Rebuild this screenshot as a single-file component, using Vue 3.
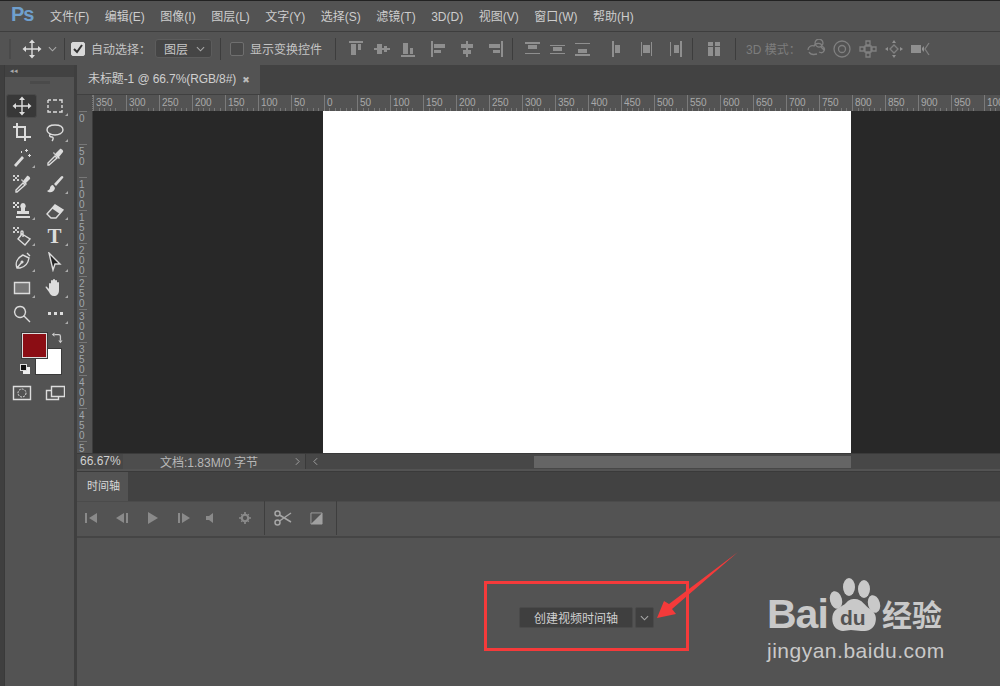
<template>
  <div class="app">
    <header class="menubar">
      <span class="logo">Ps</span>
      <nav class="menus">
        <span v-for="m in menus" :key="m">{{ m }}</span>
      </nav>
    </header>

    <section class="options">
      <i class="grip"></i>
      <svg class="ico move-ico" viewBox="0 0 20 20"><path class="st" :d="moveIcon.s" /><path class="fl" :d="moveIcon.f" /></svg>
      <svg class="chev" viewBox="0 0 10 6"><path d="M1 1l4 4 4-4" /></svg>
      <i class="sep s1"></i>
      <span class="check on">
        <svg viewBox="0 0 12 12"><path d="M2 6l3 3 5-7" /></svg>
      </span>
      <span class="lbl auto">自动选择：</span>
      <span class="select">图层<svg class="chev" viewBox="0 0 10 6"><path d="M1 1l4 4 4-4" /></svg></span>
      <i class="sep s2"></i>
      <span class="check"></span>
      <span class="lbl show">显示变换控件</span>
      <i class="sep s3"></i>
      <div class="aligns first">
        <svg v-for="d in alignA" :key="d" class="ico" viewBox="0 0 20 20"><path class="mut" :d="d" /></svg>
      </div>
      <div class="aligns second">
        <svg v-for="d in alignB" :key="d" class="ico" viewBox="0 0 20 20"><path class="mut" :d="d" /></svg>
      </div>
      <i class="sep s4"></i>
      <div class="aligns third">
        <svg v-for="d in alignC" :key="d" class="ico" viewBox="0 0 20 20"><path class="mut" :d="d" /></svg>
      </div>
      <div class="aligns fourth">
        <svg v-for="d in alignD" :key="d" class="ico" viewBox="0 0 20 20"><path class="mut" :d="d" /></svg>
      </div>
      <i class="sep s5"></i>
      <svg class="ico dist" viewBox="0 0 20 20"><path class="mut" d="M4 3h5v4H4zM11 3h5v4h-5zM4 8h5v9H4zM11 8h5v9h-5z" /></svg>
      <i class="sep s6"></i>
      <span class="lbl mode">3D 模式：</span>
      <div class="modes">
        <svg class="ico" viewBox="0 0 20 20"><path class="dim" d="M2 11c0-3 3-5 6-4 1-3 7-4 8 0 2 1 3 3 2 5s-3 2-5 1M3 13c1 2 4 3 8 2M9 4a4 4 0 1 1 0 .1M15 8l3 3" /></svg>
        <svg class="ico" viewBox="0 0 20 20"><circle class="dim" cx="10" cy="10" r="8" /><circle class="dim" cx="10" cy="10" r="3.500" /></svg>
        <svg class="ico" viewBox="0 0 20 20"><path class="dim" d="M8 2h4v4H8zM8 14h4v4H8zM2 8h4v4H2zM14 8h4v4h-4zM7 7h6v6H7z" /></svg>
        <svg class="ico" viewBox="0 0 20 20"><path class="dim" d="M6 10l4-4 4 4-4 4z" /><path class="mut" d="M10 1l2 3H8zM10 19l2-3H8zM1 10l3-2v4zM19 10l-3-2v4z" /></svg>
        <svg class="ico" viewBox="0 0 20 20"><path class="mut" d="M1 6h10v8H1zM12 9l2-2v6l-2-2z" /><path class="dim" d="M19 4l-4 6 4 6" /></svg>
      </div>
    </section>

    <div class="work">
      <aside class="toolbar">
        <div class="tb-head">◂◂</div>
        <div class="tb-grip"></div>
        <div class="tools">
          <div v-for="(t, i) in tools" :key="i" class="tool" :class="{ active: i === 0, corner: t.corner }">
            <span v-if="t.text" class="t-tool">{{ t.text }}</span>
            <svg v-else class="ico" viewBox="0 0 20 20">
              <path v-if="t.f" class="fl" :class="{ gray: t.gray }" :d="t.f" />
              <path v-if="t.s" class="st" :class="{ dark: t.dark }" :d="t.s" />
              <path v-if="t.k" class="blk" :d="t.k" />
            </svg>
          </div>
        </div>
        <div class="colors">
          <span class="swatch bg"></span>
          <span class="swatch fg"></span>
          <svg class="swap" viewBox="0 0 14 14"><path d="M4 3h5a2 2 0 0 1 2 2v5" /><path d="M4 0.500v5L1 3zM8.500 10h5L11 13z" /></svg>
          <span class="mini white"></span>
          <span class="mini black"></span>
        </div>
        <div class="modes-row">
          <svg class="ico" viewBox="0 0 20 20"><path class="st" d="M1.500 3.500h17v13h-17z" /><circle class="dash" cx="10" cy="10" r="4" /></svg>
          <svg class="ico corner-ico" viewBox="0 0 20 20"><path class="st" d="M6.500 3.500h13v10h-13zM6.500 7.500h-5v9h12v-3" /></svg>
        </div>
      </aside>

      <main class="doc">
        <div class="tabs">
          <div class="tab">未标题-1 @ 66.7%(RGB/8#)<span class="close">✖</span></div>
        </div>
        <div class="hruler">
          <span class="corner-box"></span>
          <span v-for="(n, i) in hmarks" :key="i" class="hcell">{{ n }}</span>
        </div>
        <div class="stage">
          <div class="vruler">
            <span v-for="n in vmarks" :key="n" class="vcell">{{ n }}</span>
          </div>
          <div class="canvas"><div class="paper"></div></div>
        </div>
        <div class="status">
          <span class="zoom">66.67%</span>
          <span class="docinfo">文档:1.83M/0 字节</span>
          <svg class="arr" viewBox="0 0 6 10"><path d="M1 1l4 4-4 4" /></svg>
          <div class="scroll">
            <svg class="arr back" viewBox="0 0 6 10"><path d="M5 1L1 5l4 4" /></svg>
            <span class="thumb"></span>
          </div>
        </div>
        <div class="tl-tabs">
          <div class="tl-tab">时间轴</div>
        </div>
        <div class="tl-bar">
          <svg class="tr first-tr" viewBox="0 0 14 12"><path d="M1 1h2v10H1zM13 1v10L5 6z" /></svg>
          <svg class="tr" viewBox="0 0 14 12"><path d="M9 1v10L1 6zM11 1h2v10h-2z" /></svg>
          <svg class="tr" viewBox="0 0 14 12"><path d="M2 0l10 6-10 6z" /></svg>
          <svg class="tr" viewBox="0 0 14 12"><path d="M1 1h2v10H1zM5 1l8 5-8 5z" /></svg>
          <svg class="tr narrow" viewBox="0 0 14 12"><path d="M2 4h3l4-3v10L5 8H2z" /></svg>
          <svg class="gear" viewBox="0 0 14 14"><circle cx="7" cy="7" r="3.800" fill="none" stroke="#8a8a8a" stroke-width="2.600" /><path d="M6 0h2v3H6zM6 11h2v3H6zM0 6h3v2H0zM11 6h3v2h-3zM2 3l1-1 2 2-1 1zM9 10l1-1 2 2-1 1zM11 2l1 1-2 2-1-1zM4 9l1 1-2 2-1-1z" /></svg>
          <i class="tl-sep a"></i>
          <svg class="scissors" viewBox="0 0 18 16"><circle cx="3.500" cy="3.500" r="2.500" /><circle cx="3.500" cy="12.500" r="2.500" /><path d="M5.500 5L17 12M5.500 11L17 3" /></svg>
          <svg class="tr split" viewBox="0 0 14 14"><path d="M1 1h12v12H1z" fill="none" stroke="#a0a0a0" /><path d="M1 13L13 1v12z" /></svg>
          <i class="tl-sep b"></i>
        </div>
        <div class="tl-body">
          <button class="create">创建视频时间轴</button>
          <button class="more"><svg class="chev" viewBox="0 0 10 6"><path d="M1 1l4 4 4-4" /></svg></button>
        </div>
      </main>
    </div>

    <!-- red annotation drawn over the screenshot -->
    <div class="mark"></div>
    <svg class="pointer" viewBox="0 0 1000 686">
      <path d="M738 552L669 604 664 601 657 618 676 614 672 609z" />
    </svg>

    <div class="watermark">
      <div class="wm-top">
        <span class="bai">Bai</span>
        <svg class="paw" viewBox="0 0 60 60">
          <ellipse cx="25" cy="9" rx="6" ry="9" />
          <ellipse cx="40" cy="11" rx="6" ry="9" />
          <ellipse cx="12" cy="22" rx="6" ry="9" transform="rotate(-15 12 22)" />
          <ellipse cx="50" cy="26" rx="6" ry="9" transform="rotate(-15 50 26)" />
          <path d="M31 21c7 0 10 7 15 10 6 4 7 9 5 15-3 7-9 7-14 7-3 0-7-1-10-1-4 0-8 2-12 0-6-2-8-10-6-16 2-6 9-7 13-11 3-3 4-4 9-4z" />
          <text x="16" y="47" class="du">du</text>
        </svg>
        <span class="jy">经验</span>
      </div>
      <div class="wm-url">jingyan.baidu.com</div>
    </div>
  </div>
</template>

<script setup>
  const menus = [
    "文件(F)",
    "编辑(E)",
    "图像(I)",
    "图层(L)",
    "文字(Y)",
    "选择(S)",
    "滤镜(T)",
    "3D(D)",
    "视图(V)",
    "窗口(W)",
    "帮助(H)",
  ];

  const moveIcon = {
    s: "M10 3V17M3 10H17",
    f: "M10 0.500l3 3.500H7zM10 19.500l3-3.500H7zM0.500 10l3.500-3v6zM19.500 10l-3.500-3v6z",
  };

  const alignA = [
    "M3 2h14v2H3zM5 5h5v11H5zM12 5h3v6h-3z",
    "M2 9h16v2H2zM5 5h5v10H5zM12 7h3v6h-3z",
    "M3 16h14v2H3zM5 4h5v11H5zM12 9h3v6h-3z",
  ];
  const alignB = [
    "M3 2h2v16H3zM6 5h11v4H6zM6 11h7v3H6z",
    "M9 2h2v16H9zM4 5h12v4H4zM6 11h8v4H6z",
    "M15 2h2v16h-2zM3 5h11v4H3zM7 11h7v3H7z",
  ];
  const alignC = [
    "M3 3h15v2H3zM6 6h9v4H6zM3 14h15v1H3z",
    "M3 6h15v1H3zM6 8h9v4H6zM3 14h15v1H3z",
    "M3 4h15v1H3zM6 10h9v4H6zM3 15h15v2H3z",
  ];
  const alignD = [
    "M4 2h2v16H4zM7 6h5v8H7z",
    "M4 3h1v14H4zM6 6h7v8H6zM14 3h1v14h-1z",
    "M14 2h2v16h-2zM8 6h5v8H8zM4 3h1v14H4z",
  ];

  const checker = "M1 1h2v2H1zM5 1h2v2H5zM3 3h2v2H3zM1 5h2v2H1zM5 5h2v2H5z";

  const tools = [
    moveIcon,
    { s: "M3 4h3M8 4h4M14 4h3V7M17 9v3M17 14v2h-3M12 16H8M6 16H3v-2M3 12V9M3 7V4", corner: true },
    { f: "M4 1h2v13h13v2H4zM1 4h13v15h-2V6H1z" },
    { s: "M10 3c5 0 8 2 8 5s-4 5-8 5-8-2-8-5 3-5 8-5zM5 12c-1 2 0 3 2 3s1 3 0 4", corner: true },
    { f: "M10 8l2 2-8 9-2-2zM14 1h1v3h-1zM13 2h3v1h-3zM17 6h1v3h-1zM16 7h3v1h-3zM9 3h1v2H9z", corner: true },
    { s: "M4 17l-1 0 0-2 7-7 2 2z", f: "M10 6l5-5c1-1 4 2 3 3l-4 5 1 1-1 1-6-6 1-1z" },
    { s: "M5 18l-1 0 0-2 7-7 2 2z", f: "M11 7l4-5c1-1 4 2 3 3l-4 4 1 1-1 1-5-5 1-1z", k: checker },
    { f: "M17 2c1 0 2 1 1 2L11 12l-2-2 7-7.500zM8 11c-2 0-3 2-3 3s-1 2-3 3c2 2 7 2 8-3z", corner: true },
    { f: "M11 3a3 3 0 0 1 2 5v3h4v3H5v-3h4V8a3 3 0 0 1 2-5zM4 16h14v2H4zM1 2h2v2H1zM5 2h2v2H5zM3 4h2v2H3zM1 6h2v2H1zM5 6h2v2H5z", corner: true },
    { s: "M2 14l8-9 8 5-7 8H6z", f: "M7 8.500L10 5l8 5-3 4z", corner: true },
    { s: "M10 8l8 5-5 6-7-6zM11 11V6a1 1 0 0 0-2 0v3", k: checker, corner: true },
    { text: "T", corner: true },
    { s: "M5 16C3 11 5 6 11 3l6 3c-1 6-4 9-9 10zM5 16l5-6M15 1l3 3", f: "M10 8.500a1.500 1.500 0 1 0 .1 0z", corner: true },
    { s: "M4 1l11 11h-5l-2 6z", corner: true, dark: true },
    { s: "M2.500 4.500h15v11h-15z", f: "M3 5h14v10H3z", corner: true, gray: true },
    { f: "M4 11V6a1 1 0 0 1 2 0V3a1 1 0 0 1 2 0V2a1 1 0 0 1 2 0v1a1 1 0 0 1 2 0v2a1 1 0 0 1 2 0v7c0 4-2 6-5 6-3 0-4-2-5-4l-3-4c-1-1 0-2 1-1z", corner: true },
    { s: "M8 2.500a5.500 5.500 0 1 0 .1 0zM12 12l6 6" },
    { f: "M3 8h3v3H3zM9 8h3v3H9zM15 8h3v3h-3z", corner: true },
  ];

  const hmarks = [350, 300, 250, 200, 150, 100, 50, 0];
  for (let n = 50; n <= 1000; n += 50) hmarks.push(n);

  // the last mark is cut by the status bar, only its first digit shows
  const vmarks = [0, 50, 100, 150, 200, 250, 300, 350, 400, 450, 5];
</script>

<style scoped>
  .app {
    position: relative;
    width: 1000px;
    height: 686px;
    display: flex;
    flex-direction: column;
    overflow: hidden;
    background: #535353;
    color: #c8c8c8;
    font-family: "Liberation Sans", "Noto Sans CJK SC", sans-serif;
    font-size: 12px;
  }

  /* menu */
  .menubar {
    height: 32px;
    box-sizing: border-box;
    flex: none;
    display: flex;
    align-items: center;
    padding: 0 0 2px 11px;
    border-top: 1px solid #222;
    border-bottom: 1px solid #3e3e3e;
  }
  .logo {
    width: 39px;
    color: #6f9fcd;
    font-size: 20px;
    font-weight: bold;
    letter-spacing: -1px;
    margin-top: -1px;
  }
  .menus {
    display: flex;
    align-items: baseline;
    gap: 15.500px;
    color: #cdcdcd;
  }

  /* options bar */
  .options {
    height: 33px;
    flex: none;
    display: flex;
    align-items: center;
    box-sizing: border-box;
  }
  .grip {
    width: 2px;
    height: 20px;
    margin-left: 9px;
    background: #4a4a4a;
  }
  .ico {
    width: 20px;
    height: 20px;
    flex: none;
    display: block;
  }
  .st {
    fill: none;
    stroke: #dcdcdc;
    stroke-width: 1.400;
  }
  .st.dark {
    fill: #222;
  }
  .fl {
    fill: #dcdcdc;
  }
  .fl.gray {
    fill: #777;
  }
  .blk {
    fill: #cfcfcf;
  }
  .mut {
    fill: #8f8f8f;
  }
  .dim {
    fill: none;
    stroke: #808080;
    stroke-width: 1.300;
  }
  .move-ico {
    margin-left: 11px;
  }
  .chev {
    width: 9px;
    height: 6px;
    flex: none;
  }
  .chev path {
    fill: none;
    stroke: #a8a8a8;
    stroke-width: 1.200;
  }
  .move-ico + .chev {
    margin-left: 6px;
  }
  .sep {
    width: 1px;
    height: 22px;
    background: #3d3d3d;
    flex: none;
  }
  .s1 {
    margin-left: 7px;
  }
  .check {
    width: 12px;
    height: 12px;
    flex: none;
    border: 1px solid #6f6f6f;
    border-radius: 2px;
    background: #4a4a4a;
    margin-left: 6px;
  }
  .check.on {
    background: #d8d8d8;
    border-color: #d8d8d8;
  }
  .check svg {
    display: block;
  }
  .check path {
    fill: none;
    stroke: #333;
    stroke-width: 2;
  }
  .lbl {
    flex: none;
    white-space: nowrap;
    color: #c4c4c4;
  }
  .auto {
    margin-left: 6px;
    width: 60px;
  }
  .select {
    width: 57px;
    height: 19px;
    box-sizing: border-box;
    margin-left: 4px;
    padding: 0 6px 0 8px;
    display: flex;
    align-items: center;
    justify-content: space-between;
    background: #454545;
    border: 1px solid #5c5c5c;
    border-radius: 3px;
    flex: none;
  }
  .s2 {
    margin-left: 8px;
  }
  .options .s2 + .check {
    margin-left: 9px;
  }
  .show {
    margin-left: 6px;
    width: 72px;
  }
  .s3 {
    margin-left: 13px;
  }
  .aligns {
    display: flex;
    gap: 6px;
    flex: none;
  }
  .first {
    margin-left: 10px;
  }
  .second {
    margin-left: 10px;
    gap: 9px;
  }
  .s4 {
    margin-left: 6px;
  }
  .third {
    margin-left: 9px;
    gap: 5px;
  }
  .fourth {
    margin-left: 16px;
    gap: 9px;
  }
  .s5 {
    margin-left: 6px;
  }
  .dist {
    margin-left: 11px;
  }
  .s6 {
    margin-left: 11px;
  }
  .mode {
    margin-left: 10px;
    color: #7d7d7d;
    width: 58px;
  }
  .modes {
    display: flex;
    gap: 6px;
    margin-left: 2px;
  }

  /* workspace */
  .work {
    flex: 1;
    display: flex;
    min-height: 0;
    background: #3f3f3f;
  }
  .toolbar {
    width: 69px;
    margin-left: 5px;
    flex: none;
    background: #535353;
    box-shadow: -1px 0 0 #3a3a3a;
    position: relative;
  }
  .tb-head {
    height: 12px;
    background: #424242;
    color: #aaa;
    font-size: 7px;
    line-height: 12px;
    padding-left: 5px;
  }
  .tb-grip {
    height: 3px;
    width: 20px;
    margin: 4px auto 0;
    background: #4a4a4a;
  }
  .tools {
    display: grid;
    grid-template-columns: 33px 33px;
    grid-auto-rows: 26px;
    padding-top: 9px;
  }
  .tool {
    position: relative;
    display: flex;
    align-items: center;
    justify-content: center;
    width: 31px;
    height: 24px;
    margin: 1px;
    box-sizing: border-box;
  }
  .tool.active {
    background: #383838;
    border: 1px solid #4a4a4a;
    border-radius: 3px;
  }
  .tool.corner::after {
    content: "";
    position: absolute;
    right: 2px;
    bottom: 2px;
    border-left: 3px solid transparent;
    border-bottom: 3px solid #aaa;
  }
  .t-tool {
    font-family: "Liberation Serif", serif;
    font-size: 21px;
    font-weight: bold;
    color: #dcdcdc;
    line-height: 20px;
  }
  .colors {
    position: relative;
    height: 48px;
    margin-top: 6px;
  }
  .swatch {
    position: absolute;
    box-sizing: border-box;
  }
  .swatch.fg {
    left: 17px;
    top: 0;
    width: 25px;
    height: 25px;
    background: #8b0d14;
    border: 1px solid #ddd;
    box-shadow: 0 0 0 1px #3a3a3a;
  }
  .swatch.bg {
    left: 31px;
    top: 16px;
    width: 25px;
    height: 25px;
    background: #fff;
    box-shadow: 0 0 0 1px #3a3a3a;
  }
  .swap {
    position: absolute;
    left: 46px;
    top: -1px;
    width: 12px;
    height: 12px;
  }
  .swap path {
    fill: #ccc;
  }
  .swap path:first-child {
    fill: none;
    stroke: #ccc;
    stroke-width: 1.500;
  }
  .mini {
    position: absolute;
    width: 7px;
    height: 7px;
    box-sizing: border-box;
  }
  .mini.white {
    left: 18px;
    top: 34px;
    background: #eee;
  }
  .mini.black {
    left: 15px;
    top: 31px;
    background: #111;
    border: 1px solid #ddd;
  }
  .modes-row {
    display: flex;
    gap: 13px;
    padding-left: 7px;
    margin-top: 2px;
  }
  .dash {
    fill: none;
    stroke: #dcdcdc;
    stroke-dasharray: 2 1;
  }

  /* document */
  .doc {
    flex: 1;
    min-width: 0;
    margin-left: 3px;
    display: flex;
    flex-direction: column;
    background: #535353;
  }
  .tabs {
    height: 29px;
    flex: none;
    background: #424242;
    display: flex;
  }
  .tab {
    width: 183px;
    box-sizing: border-box;
    padding-left: 11px;
    background: #535353;
    line-height: 29px;
    color: #cfcfcf;
    white-space: nowrap;
    letter-spacing: -0.100px;
  }
  .close {
    margin-left: 6px;
    font-size: 9px;
    color: #bbb;
    font-family: "DejaVu Sans", sans-serif;
  }
  .hruler {
    height: 17px;
    flex: none;
    display: flex;
    overflow: hidden;
    background-color: #535353;
    border-top: 1px solid #404040;
    box-sizing: border-box;
  }
  .corner-box {
    width: 15px;
    flex: none;
    background: #4e4e4e;
    border-right: 1px dotted #777;
  }
  .hcell {
    width: 33px;
    flex: none;
    box-sizing: border-box;
    border-left: 1px solid #7a7a7a;
    padding-left: 2px;
    font-size: 10px;
    line-height: 15px;
    color: #a9a9a9;
    background: repeating-linear-gradient(90deg, transparent 0 4.500px, #777 4.500px 5.500px) 0 13px / 100% 3px no-repeat;
  }
  .stage {
    height: 342px;
    flex: none;
    display: flex;
    overflow: hidden;
  }
  .vruler {
    width: 16px;
    flex: none;
    overflow: hidden;
    background: #535353;
    border-right: 1px solid #3c3c3c;
    box-sizing: border-box;
  }
  .vcell {
    display: block;
    height: 33px;
    box-sizing: border-box;
    border-top: 1px solid #777;
    width: 8px;
    margin-left: 2px;
    padding-top: 2px;
    font-size: 10px;
    line-height: 10px;
    word-break: break-all;
    color: #a0a6ab;
    overflow: hidden;
  }
  .vcell:last-child {
    height: 12px;
  }
  .canvas {
    flex: 1;
    background: #282828;
    padding-left: 230px;
  }
  .paper {
    width: 528px;
    height: 100%;
    background: #fff;
  }
  .status {
    height: 16px;
    flex: none;
    display: flex;
    align-items: center;
    background: #4d4d4d;
    border-top: 1px solid #3a3a3a;
    box-sizing: border-box;
  }
  .zoom {
    width: 46px;
    height: 15px;
    line-height: 15px;
    padding-left: 3px;
    box-sizing: border-box;
    background: #474747;
    color: #d0d0d0;
    flex: none;
  }
  .docinfo {
    width: 172px;
    padding-left: 37px;
    box-sizing: border-box;
    color: #b8b8b8;
    flex: none;
    white-space: nowrap;
  }
  .arr {
    width: 5px;
    height: 9px;
    flex: none;
  }
  .arr path {
    fill: none;
    stroke: #b0b0b0;
  }
  .scroll {
    flex: 1;
    height: 15px;
    margin-left: 5px;
    padding-left: 7px;
    display: flex;
    align-items: center;
    background: #474747;
    border-left: 1px solid #3a3a3a;
  }
  .thumb {
    width: 317px;
    height: 12px;
    margin-left: 216px;
    background: #656565;
  }
  .tl-tabs {
    height: 30px;
    flex: none;
    margin-top: 2px;
    background: #424242;
    border-top: 1px solid #3a3a3a;
    box-sizing: border-box;
  }
  .tl-tab {
    width: 51px;
    height: 100%;
    line-height: 28px;
    padding-left: 10px;
    box-sizing: border-box;
    background: #535353;
    color: #d8d8d8;
    font-size: 11px;
  }
  .tl-bar {
    height: 37px;
    flex: none;
    display: flex;
    align-items: center;
    gap: 17px;
    box-sizing: border-box;
    border-top: 1px solid #4b4b4b;
    border-bottom: 2px solid #454545;
    padding: 0 0 2px 7px;
  }
  .tr {
    width: 14px;
    height: 12px;
    flex: none;
    fill: #8a8a8a;
  }
  .narrow {
    margin-left: -4px;
  }
  .gear {
    width: 12px;
    height: 12px;
    flex: none;
    fill: #8a8a8a;
    margin-left: 4px;
  }
  .tl-sep {
    width: 1px;
    height: 34px;
    background: #3e3e3e;
    flex: none;
  }
  .tl-sep.a {
    margin-left: -4px;
  }
  .scissors {
    width: 18px;
    height: 16px;
    margin-left: -8px;
    flex: none;
    fill: none;
    stroke: #a6a6a6;
    stroke-width: 1.500;
  }
  .tr.split {
    width: 13px;
    height: 13px;
    fill: #a0a0a0;
    margin-left: 1px;
  }
  .tl-sep.b {
    margin-left: -4px;
  }
  .tl-body {
    flex: 1;
    display: flex;
    gap: 2px;
    padding: 69px 0 0 442px;
    align-items: flex-start;
  }
  .create,
  .more {
    height: 21px;
    padding: 0;
    box-sizing: border-box;
    background: #3f3f3f;
    border: 1px solid #4a4a4a;
    border-radius: 2px;
    color: #d0d0d0;
    font-family: inherit;
    font-size: 12px;
  }
  .create {
    width: 114px;
  }
  .more {
    width: 19px;
    display: flex;
    align-items: center;
    justify-content: center;
  }

  /* overlays */
  .mark {
    position: absolute;
    left: 484px;
    top: 581px;
    width: 205px;
    height: 70px;
    box-sizing: border-box;
    border: 3px solid #f53a3a;
  }
  .pointer {
    position: absolute;
    inset: 0;
    width: 1000px;
    height: 686px;
    fill: #f53a3a;
    pointer-events: none;
  }
  .watermark {
    position: absolute;
    left: 767px;
    top: 578px;
    width: 190px;
    color: #c9c9c9;
  }
  .wm-top {
    display: flex;
    align-items: flex-end;
    height: 60px;
  }
  .bai {
    font-size: 41px;
    font-weight: bold;
    line-height: 47px;
    letter-spacing: -1px;
    width: 60px;
    flex: none;
  }
  .paw {
    width: 60px;
    height: 60px;
    flex: none;
    fill: #c9c9c9;
    margin-left: -3px;
  }
  .du {
    font-size: 21px;
    font-weight: bold;
    fill: #535353;
    font-family: "Liberation Sans", sans-serif;
  }
  .jy {
    font-size: 30px;
    line-height: 44px;
    font-weight: bold;
    flex: none;
    margin-left: -2px;
  }
  .wm-url {
    font-size: 21px;
    line-height: 24px;
    margin-top: 1px;
    letter-spacing: 0.500px;
    white-space: nowrap;
  }
</style>
